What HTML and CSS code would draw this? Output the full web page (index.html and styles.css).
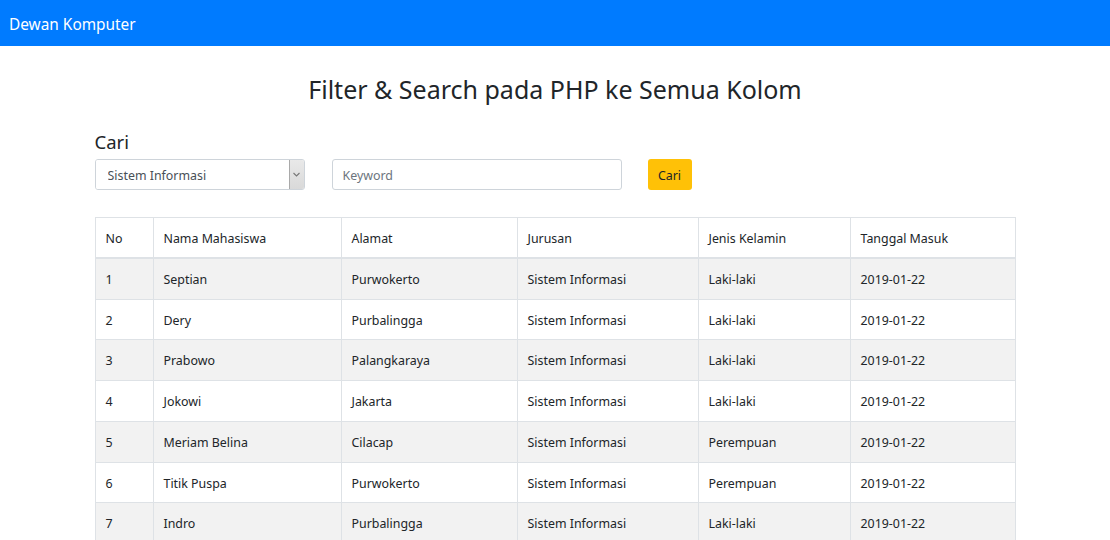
FILE: index.html
```html
<!DOCTYPE html>
<html lang="id">
<head>
    <meta charset="UTF-8">
    <meta name="viewport" content="width=device-width, initial-scale=1.0">
    <title>Filter &amp; Search pada PHP ke Semua Kolom</title>
    <link rel="stylesheet" href="styles.css">
</head>
<body>

    <nav class="navbar">
        <a class="navbar-brand" href="#">Dewan Komputer</a>
    </nav>

    <div class="container">
        <h2 class="title">Filter &amp; Search pada PHP ke Semua Kolom</h2>

        <h4 class="label">Cari</h4>
        <form class="search-form">
            <div class="select-box">
                <select name="kolom">
                    <option>Sistem Informasi</option>
                    <option>Teknik Informatika</option>
                </select>
                <span class="select-arrow">
                    <svg width="7" height="5" viewBox="0 0 7 5"><path d="M0.5 1 L3.5 4 L6.5 1" fill="none" stroke="#777" stroke-width="1.1"/></svg>
                </span>
            </div>
            <input class="keyword" type="text" placeholder="Keyword">
            <button class="btn-cari" type="button">Cari</button>
        </form>

        <table class="data-table">
            <thead>
                <tr>
                    <th class="col-no">No</th>
                    <th class="col-nama">Nama Mahasiswa</th>
                    <th class="col-alamat">Alamat</th>
                    <th class="col-jurusan">Jurusan</th>
                    <th class="col-jk">Jenis Kelamin</th>
                    <th>Tanggal Masuk</th>
                </tr>
            </thead>
            <tbody>
                <tr><td>1</td><td>Septian</td><td>Purwokerto</td><td>Sistem Informasi</td><td>Laki-laki</td><td>2019-01-22</td></tr>
                <tr><td>2</td><td>Dery</td><td>Purbalingga</td><td>Sistem Informasi</td><td>Laki-laki</td><td>2019-01-22</td></tr>
                <tr><td>3</td><td>Prabowo</td><td>Palangkaraya</td><td>Sistem Informasi</td><td>Laki-laki</td><td>2019-01-22</td></tr>
                <tr><td>4</td><td>Jokowi</td><td>Jakarta</td><td>Sistem Informasi</td><td>Laki-laki</td><td>2019-01-22</td></tr>
                <tr><td>5</td><td>Meriam Belina</td><td>Cilacap</td><td>Sistem Informasi</td><td>Perempuan</td><td>2019-01-22</td></tr>
                <tr><td>6</td><td>Titik Puspa</td><td>Purwokerto</td><td>Sistem Informasi</td><td>Perempuan</td><td>2019-01-22</td></tr>
                <tr><td>7</td><td>Indro</td><td>Purbalingga</td><td>Sistem Informasi</td><td>Laki-laki</td><td>2019-01-22</td></tr>
            </tbody>
        </table>
    </div>

</body>
</html>
```

FILE: styles.css
```css
body {
    font-family: "Noto Sans", "Open Sans", sans-serif;
    margin: 0;
    padding: 0;
    background: #fff;
    color: #212529;
}

.navbar {
    background: #007bff;
    height: 46px;
    box-sizing: border-box;
    display: flex;
    align-items: center;
    padding: 3px 9px 0;
}

.navbar-brand {
    color: #fff;
    text-decoration: none;
    font-size: 15.4px;
}

.container {
    width: 921px;
    margin: 0 auto;
}

.title {
    text-align: center;
    font-weight: normal;
    font-size: 25px;
    margin: 24px 0 0;
    line-height: 38px;
}

.label {
    font-weight: normal;
    font-size: 18.5px;
    margin: 22px 0 0;
    line-height: 24px;
}

.search-form {
    display: flex;
    align-items: center;
    margin-top: 5px;
    height: 31px;
}

.select-box {
    width: 210px;
    height: 31px;
    box-sizing: border-box;
    border: 1px solid #ced4da;
    border-radius: 3px;
    display: flex;
    overflow: hidden;
}

.select-box select {
    flex: 1;
    appearance: none;
    -webkit-appearance: none;
    border: none;
    background: #fff;
    font-family: inherit;
    font-size: 12.4px;
    color: #495057;
    padding: 1px 0 0 12px;
    outline: none;
}

.select-arrow {
    width: 14px;
    border-left: 1px solid #a9a9a9;
    background: linear-gradient(#e9e9e9, #d9d9d9);
    display: flex;
    align-items: center;
    justify-content: center;
}

.keyword {
    width: 290px;
    height: 31px;
    box-sizing: border-box;
    margin-left: 27px;
    border: 1px solid #ced4da;
    border-radius: 3px;
    padding: 1px 10px 0;
    font-family: inherit;
    font-size: 12.4px;
    outline: none;
}

.keyword::placeholder {
    color: #6c757d;
}

.btn-cari {
    margin-left: 26px;
    width: 44px;
    height: 31px;
    background: #ffc107;
    border: none;
    border-radius: 3px;
    font-family: inherit;
    font-size: 12.4px;
    color: #212529;
    padding: 1px 0 0;
    cursor: pointer;
}

.data-table {
    width: 100%;
    margin-top: 27px;
    border-collapse: collapse;
    font-size: 12.4px;
}

.data-table th,
.data-table td {
    border: 1px solid #dee2e6;
    text-align: left;
    font-weight: normal;
    padding: 11px 10px 9px;
    line-height: 19.7px;
}

.data-table thead th {
    border-bottom: 2px solid #dee2e6;
    line-height: 19px;
}

.data-table tbody tr:nth-child(odd) {
    background: #f2f2f2;
}

.col-no { width: 37px; }
.col-nama { width: 167px; }
.col-alamat { width: 155px; }
.col-jurusan { width: 160px; }
.col-jk { width: 131px; }
```
